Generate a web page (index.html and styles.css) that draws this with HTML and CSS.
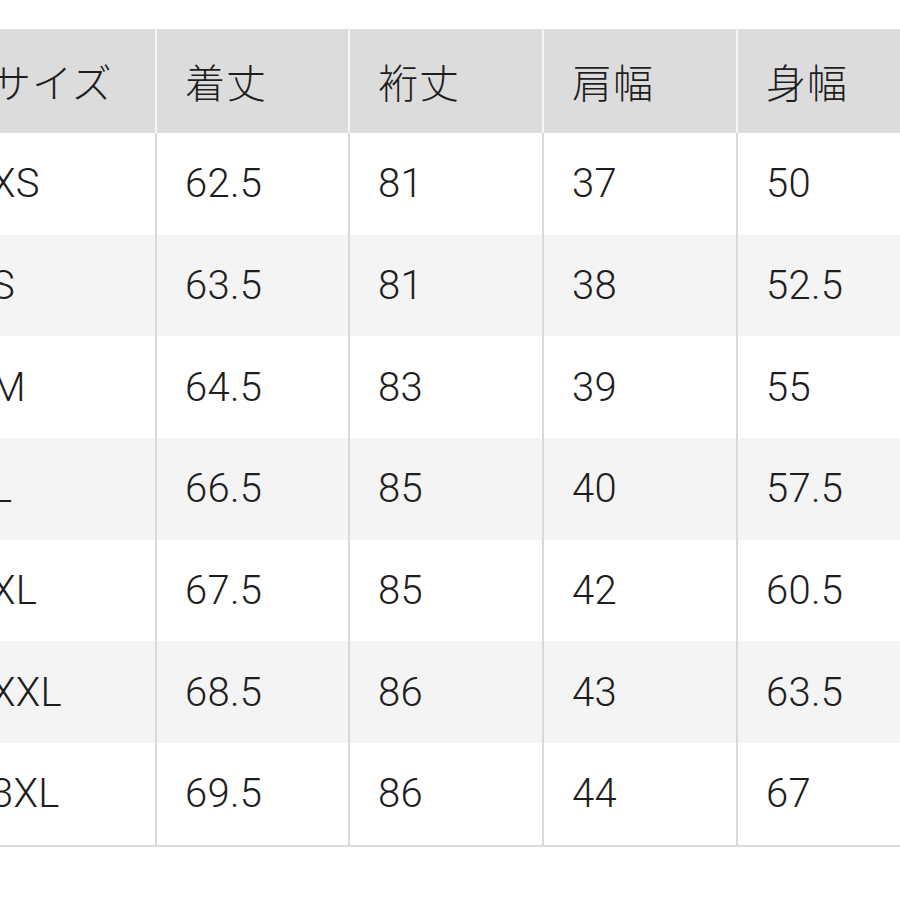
FILE: index.html
```html
<!DOCTYPE html>
<html lang="ja">
<head>
<meta charset="utf-8">
<link rel="stylesheet" href="styles.css">
</head>
<body>
<div class="frame">
  <div class="table">
    <div class="row head">
      <div class="cell">サイズ</div>
      <div class="cell">着丈</div>
      <div class="cell">裄丈</div>
      <div class="cell">肩幅</div>
      <div class="cell">身幅</div>
    </div>
    <div class="row">
      <div class="cell">XS</div><div class="cell">62.5</div><div class="cell">81</div><div class="cell">37</div><div class="cell">50</div>
    </div>
    <div class="row alt">
      <div class="cell">S</div><div class="cell">63.5</div><div class="cell">81</div><div class="cell">38</div><div class="cell">52.5</div>
    </div>
    <div class="row">
      <div class="cell">M</div><div class="cell">64.5</div><div class="cell">83</div><div class="cell">39</div><div class="cell">55</div>
    </div>
    <div class="row alt">
      <div class="cell">L</div><div class="cell">66.5</div><div class="cell">85</div><div class="cell">40</div><div class="cell">57.5</div>
    </div>
    <div class="row">
      <div class="cell">XL</div><div class="cell">67.5</div><div class="cell">85</div><div class="cell">42</div><div class="cell">60.5</div>
    </div>
    <div class="row alt">
      <div class="cell">XXL</div><div class="cell">68.5</div><div class="cell">86</div><div class="cell">43</div><div class="cell">63.5</div>
    </div>
    <div class="row last">
      <div class="cell">3XL</div><div class="cell">69.5</div><div class="cell">86</div><div class="cell">44</div><div class="cell">67</div>
    </div>
  </div>
</div>
</body>
</html>
```

FILE: styles.css
```css
html, body {
  margin: 0;
  padding: 0;
  background: #ffffff;
}
body {
  width: 900px;
  height: 900px;
  overflow: hidden;
  font-family: Roboto, "Noto Sans CJK JP", sans-serif;
  color: #1e1e1e;
}
.frame {
  padding-top: 29px;
  margin-left: -37px;
  width: 990px;
}
.table {
  border-top: 1px solid #e2e2e2;
  border-bottom: 2px solid #dcdcdc;
  width: 970px;
}
.row {
  display: grid;
  grid-template-columns: 194px 193px 194px 194px 195px;
  height: 101.7px;
  background: #ffffff;
}
.row.alt {
  background: #f4f4f4;
}
.row.head {
  height: 103px;
  background: #dcdcdc;
}
.cell {
  display: flex;
  align-items: center;
  padding-left: 28px;
  font-size: 40px;
  font-weight: 300;
  letter-spacing: 0.3px;
  border-right: 2px solid #d9d9d9;
  box-sizing: border-box;
}
.row.head .cell {
  border-right-color: #f6f6f6;
  font-family: "Noto Sans CJK JP", sans-serif;
  font-size: 40px;
  font-weight: 300;
  letter-spacing: 1px;
  padding-bottom: 2px;
}
.cell:last-child {
  border-right: none;
}
```
